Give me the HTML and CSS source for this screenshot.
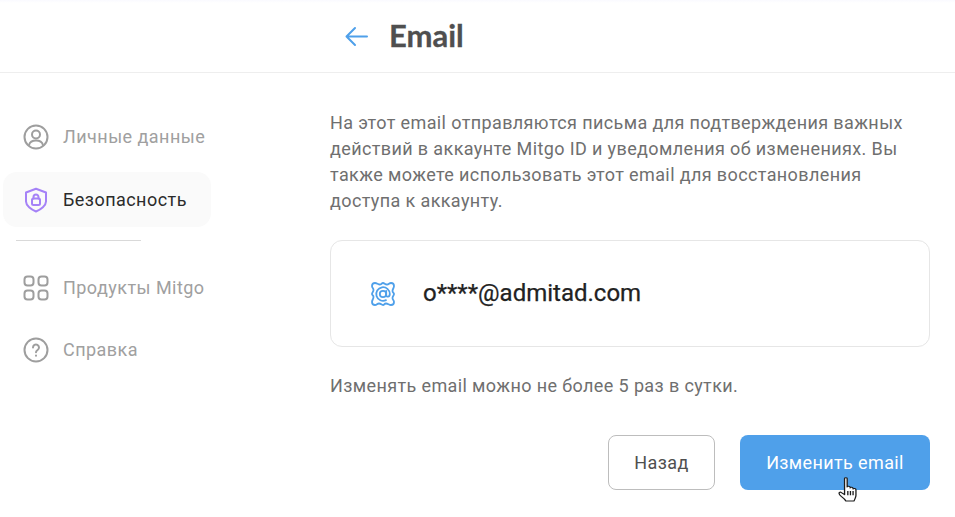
FILE: index.html
```html
<!DOCTYPE html>
<html lang="ru">
<head>
  <meta charset="UTF-8">
  <title>Mitgo ID – Email</title>
  <link rel="stylesheet" href="styles.css">
</head>
<body>

  <header class="topbar">
    <a class="back" href="#">
      <svg width="24" height="24" viewBox="0 0 24 24" fill="none" stroke="#4fa0ea" stroke-width="2" stroke-linecap="round" stroke-linejoin="round">
        <path d="M22 12.500H1.500M10 4L1.500 12.500L10 21"/>
      </svg>
    </a>
    <h1>Email</h1>
  </header>

  <div class="layout">
    <nav class="sidebar">
      <a class="nav-item nav-first" href="#">
        <svg width="26" height="26" viewBox="0 0 26 26" fill="none" stroke="#9e9e9e" stroke-width="2" stroke-linecap="round">
          <circle cx="13" cy="13" r="11.500"/>
          <circle cx="13" cy="10.500" r="4"/>
          <path d="M6 21c.8-3 3.500-4.500 7-4.500s6.200 1.500 7 4.500"/>
        </svg>
        <span>Личные данные</span>
      </a>
      <a class="nav-item active" href="#">
        <svg width="26" height="26" viewBox="0 0 26 26" fill="none" stroke="#a582f7" stroke-width="2" stroke-linecap="round" stroke-linejoin="round">
          <path d="M13 1.800L23 5.500V14.500C23 18.500 18 22.500 13 24.500C8 22.500 3 18.500 3 14.500V5.500Z"/>
          <rect x="9" y="11.500" width="8" height="6.500" rx="1.500"/>
          <path d="M10.500 11.500V10a2.500 2.500 0 0 1 5 0v1.500"/>
        </svg>
        <span>Безопасность</span>
      </a>
      <div class="nav-divider"></div>
      <a class="nav-item" href="#">
        <svg width="26" height="26" viewBox="0 0 26 26" fill="none" stroke="#9e9e9e" stroke-width="2">
          <rect x="1.500" y="1.500" width="9" height="9" rx="3"/>
          <rect x="15.500" y="1.500" width="9" height="9" rx="3"/>
          <rect x="1.500" y="15.500" width="9" height="9" rx="3"/>
          <rect x="15.500" y="15.500" width="9" height="9" rx="3"/>
        </svg>
        <span>Продукты Mitgo</span>
      </a>
      <a class="nav-item" href="#">
        <svg width="26" height="26" viewBox="0 0 26 26" fill="none" stroke="#9e9e9e" stroke-width="2" stroke-linecap="round">
          <circle cx="13" cy="13" r="11.500"/>
          <path d="M10 10.500a3 3 0 1 1 4.600 2.500c-1 .7-1.600 1.200-1.600 2.300"/>
          <path d="M13 18.600v.2"/>
        </svg>
        <span>Справка</span>
      </a>
    </nav>

    <main class="content">
      <p class="lead">На этот email отправляются письма для подтверждения важных действий в аккаунте Mitgo ID и уведомления об изменениях. Вы также можете использовать этот email для восстановления доступа к аккаунту.</p>

      <div class="email-card">
        <svg width="26" height="26" viewBox="0 0 26 26" fill="none" stroke="#4fa0ea" stroke-width="1.800" stroke-linecap="round" stroke-linejoin="round">
          <path d="M5 2C7 2 8 3.500 10 3.500S11.500 2 13 2S15 3.500 17 3.500S19 2 21 2C23 2 24 3 24 5C24 7 22.500 8 22.500 10S24 11.500 24 13S22.500 15 22.500 17S24 19 24 21C24 23 23 24 21 24C19 24 18 22.500 16 22.500S14.500 24 13 24S11 22.500 9 22.500S7 24 5 24C3 24 2 23 2 21C2 19 3.500 18 3.500 16S2 14.500 2 13S3.500 11 3.500 9S2 7 2 5C2 3 3 2 5 2Z"/>
          <circle cx="13" cy="13" r="3.200"/>
          <path d="M16.200 10v4c0 2.400 3.600 2.400 3.600-1A6.800 6.800 0 1 0 16 19.100"/>
        </svg>
        <span class="email-value">o****@admitad.com</span>
      </div>

      <p class="note">Изменять email можно не более 5 раз в сутки.</p>

      <div class="buttons">
        <button class="btn btn-back">Назад</button>
        <button class="btn btn-main">Изменить email</button>
      </div>
    </main>
  </div>

  <!-- курсор поверх кнопки -->
  <svg class="cursor" width="19" height="25" viewBox="0 0 14.500 24" preserveAspectRatio="none" stroke="#1c1c1c" stroke-width="1" stroke-linejoin="round">
    <path fill="#fff" d="M5 1.500C5 .4 7 .4 7 1.500V9.500C7.200 8.500 9.200 8.500 9.300 9.800V10.500C9.600 9.600 11.400 9.700 11.500 11V11.500C12 10.700 13.600 11 13.700 12.300V17.500C13.700 20 12.700 21 12.300 23H6C5.300 21.300 4 20 2.700 18.800C1.700 17.800 .8 16.500 .8 15.500C.8 14.500 1.800 14.200 2.600 14.900L5 17Z"/>
    <path fill="none" d="M7.500 13.500V17.500M9.500 13.500V17.500M11.500 13.500V17.500"/>
  </svg>

</body>
</html>
```

FILE: styles.css
```css
* {
  box-sizing: border-box;
}

body {
  margin: 0;
  height: 517px;
  overflow: hidden;
  position: relative;
  font-family: Roboto, Arial, sans-serif;
  letter-spacing: .38px;
  background: #fff;
  background-image: linear-gradient(#fafaff, #fff 3px);
}

.topbar {
  height: 73px;
  display: flex;
  align-items: center;
  gap: 20px;
  padding: 0 0 1px 345px;
  border-bottom: 1px solid #eeeeee;
}

.back {
  display: flex;
}

h1 {
  margin: 0 0 2px;
  font-family: Lato, sans-serif;
  font-size: 31px;
  font-weight: 700;
  letter-spacing: 0;
  color: #4f4f4f;
  -webkit-text-stroke: .3px #4f4f4f;
}

.layout {
  display: flex;
}

.sidebar {
  width: 330px;
  padding: 37px 0 0 3px;
  display: flex;
  flex-direction: column;
  gap: 7px;
}

.nav-item {
  width: 208px;
  height: 55px;
  display: flex;
  align-items: center;
  gap: 14px;
  padding-left: 20px;
  border-radius: 14px;
  font-size: 18px;
  letter-spacing: .46px;
  color: #a0a0a0;
  text-decoration: none;
}

.nav-first {
  padding-bottom: 2px;
}

.nav-item.active {
  background: #fafafa;
  color: #2b2b2b;
}

.nav-divider {
  width: 125px;
  height: 1px;
  margin: 6px 0 12px 13px;
  background: #d9d9d9;
}

.content {
  width: 600px;
  padding-top: 37px;
}

.lead {
  margin: 0 0 26px;
  font-size: 18px;
  line-height: 26px;
  color: #6f6f6f;
}

.email-card {
  height: 107px;
  display: flex;
  align-items: center;
  gap: 27px;
  padding-left: 39px;
  border: 1px solid #e6e6e6;
  border-radius: 12px;
}

.email-value {
  margin-bottom: 2px;
  font-size: 24px;
  letter-spacing: 0;
  color: #222;
  -webkit-text-stroke: .25px #222;
}

.note {
  margin: 26px 0 36px;
  font-size: 18px;
  line-height: 26px;
  color: #6f6f6f;
}

.buttons {
  display: flex;
  justify-content: flex-end;
  gap: 25px;
}

.btn {
  height: 55px;
  border-radius: 8px;
  font-family: Roboto, Arial, sans-serif;
  font-size: 18px;
  letter-spacing: .38px;
  cursor: pointer;
}

.btn-back {
  width: 107px;
  background: #fff;
  border: 1px solid #bdbdbd;
  color: #4f4f4f;
}

.btn-main {
  width: 190px;
  background: #4fa0ea;
  border: none;
  color: #fff;
}

.cursor {
  position: absolute;
  left: 838px;
  top: 477px;
}
```
